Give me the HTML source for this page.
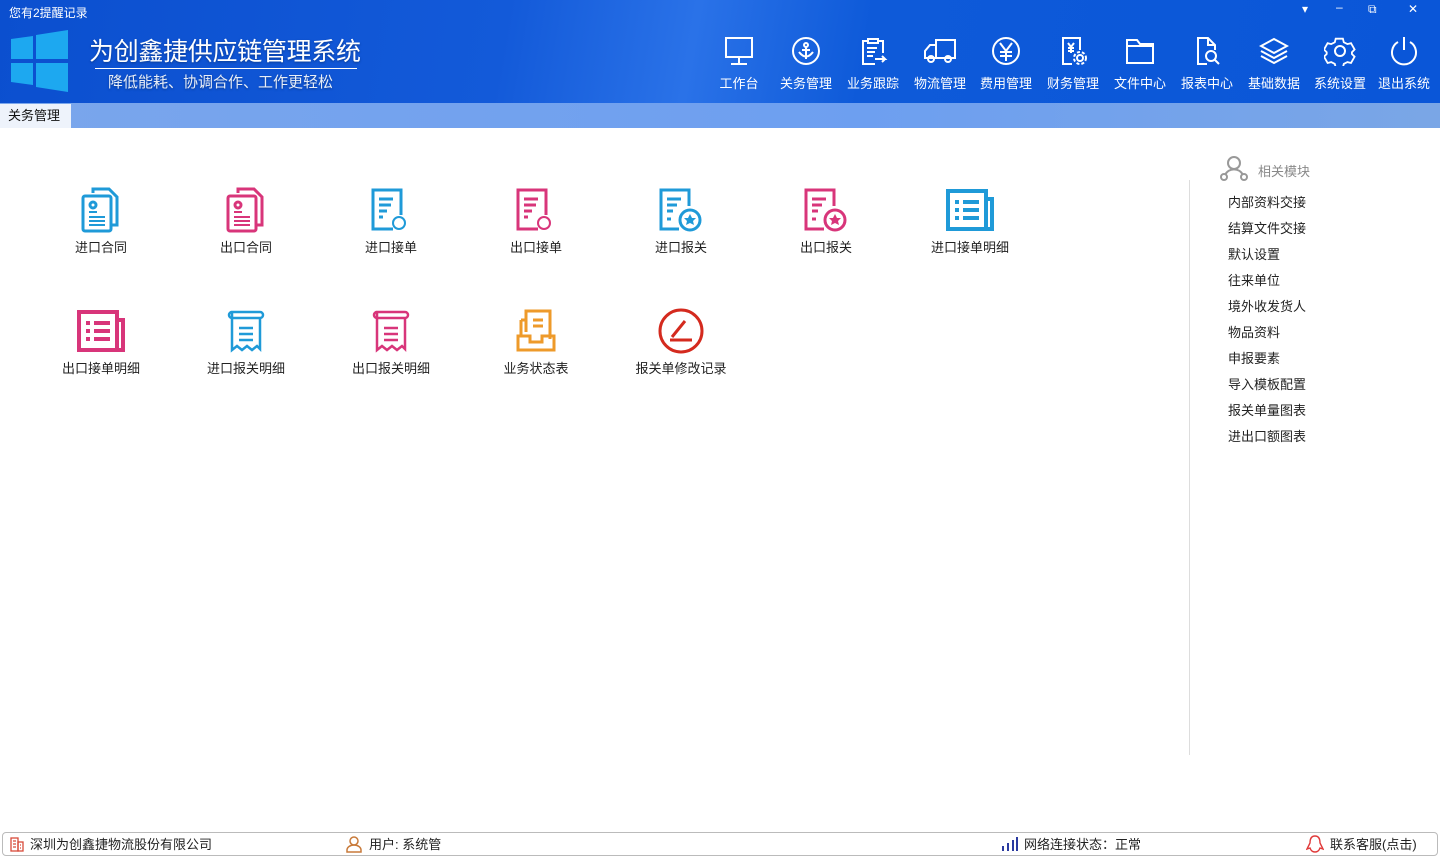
<!DOCTYPE html>
<html><head><meta charset="utf-8"><style>
*{margin:0;padding:0;box-sizing:border-box}
body{width:1440px;height:856px;position:relative;background:#fff;font-family:"Liberation Sans","Noto Sans CJK SC",sans-serif;font-size:13px;color:#222;overflow:hidden}
.hdr{position:absolute;left:0;top:0;width:1440px;height:103px;background:linear-gradient(100deg,#0b4fcf 0%,#135ad9 35%,#2a72e8 48%,#0e5ad9 60%,#0a56d8 100%)}
.tabbar{position:absolute;left:0;top:103px;width:1440px;height:25px;background:linear-gradient(90deg,#7aa6ec,#6d9ff0 60%,#7aa6e6)}
.tab{position:absolute;left:0;top:104px;width:71px;height:24px;background:#eef3fb;font-size:13px;line-height:24px;padding-left:8px;color:#111}
.abs{position:absolute}
.nav{position:absolute;top:36px;width:66px;text-align:center;color:#fff;font-size:13px}
.nav svg{display:block;margin:0 auto 7px}
.it{position:absolute;width:140px;text-align:center;font-size:13px;color:#222}
.it svg{display:block;margin:0 auto 4px}
.rl{position:absolute;left:1228px;font-size:13px;color:#222}
.sb{position:absolute;left:2px;top:832px;width:1436px;height:24px;border:1px solid #bbb;border-radius:4px;background:#fff}
.sb span{position:absolute;top:1px;font-size:13px;color:#222}
</style></head><body>
<div class="hdr"></div>
<div class="abs" style="left:9px;top:4px;color:#fff;font-size:12px">您有2提醒记录</div>
<svg class="abs" style="left:11px;top:30px" width="58" height="62"><polygon points="0,9 22,6 22,29 0,29" fill="#1da8f0"/><polygon points="25,5 57,0 57,29 25,29" fill="#1da8f0"/><polygon points="0,33 22,33 22,55 0,52" fill="#1da8f0"/><polygon points="25,33 57,33 57,62 25,57" fill="#1da8f0"/></svg>
<div class="abs" style="left:89px;top:32px;color:#fff;font-size:25px;letter-spacing:-0.3px;text-shadow:0 1px 2px #0a3a90">为创鑫捷供应链管理系统</div>
<div class="abs" style="left:95px;top:68px;width:262px;height:1px;background:#fff"></div>
<div class="abs" style="left:108px;top:71px;color:#e8eef8;font-size:15px;text-shadow:0 1px 2px #0a3a90">降低能耗、协调合作、工作更轻松</div>
<div class="abs" style="left:1300px;top:2px;color:#fff;font-size:12px;width:130px">
<span class="abs" style="left:2px">▾</span><span class="abs" style="left:36px;top:-2px">–</span><span class="abs" style="left:68px">⧉</span><span class="abs" style="left:108px">✕</span></div>
<div class="nav" style="left:706px"><svg width="30" height="30" fill="none" stroke="#fff" stroke-width="2"><rect x="2" y="2" width="26" height="19"/><path d="M15 21v6M7 28h16"/></svg>工作台</div>
<div class="nav" style="left:773px"><svg width="30" height="30" fill="none" stroke="#fff" stroke-width="2"><circle cx="15" cy="15" r="13"/><circle cx="15" cy="9" r="2"/><path d="M15 11v12M8 16q7 9 14 0M11 14h8"/></svg>关务管理</div>
<div class="nav" style="left:840px"><svg width="30" height="30" fill="none" stroke="#fff" stroke-width="2"><path d="M10 3h10v4H10zM10 5H5v23h12M20 5h5v12M9 12h10M9 16h8M9 20h6M17 23h10l-3-3m3 3-3 3"/></svg>业务跟踪</div>
<div class="nav" style="left:907px"><svg width="34" height="30" fill="none" stroke="#fff" stroke-width="2"><rect x="13" y="4" width="19" height="18"/><path d="M13 9H7l-5 6v7h11"/><circle cx="8" cy="23" r="3"/><circle cx="25" cy="23" r="3"/></svg>物流管理</div>
<div class="nav" style="left:973px"><svg width="30" height="30" fill="none" stroke="#fff" stroke-width="2"><circle cx="15" cy="15" r="13"/><path d="M9 7l6 8 6-8M15 15v10M9 16h12M9 20h12"/></svg>费用管理</div>
<div class="nav" style="left:1040px"><svg width="30" height="30" fill="none" stroke="#fff" stroke-width="2"><path d="M14 28H5V2h17v12"/><path d="M10 7l3 4 3-4M13 11v6M10 12h6M10 15h6"/><circle cx="22" cy="22" r="3"/><circle cx="22" cy="22" r="6" stroke-dasharray="3 2"/></svg>财务管理</div>
<div class="nav" style="left:1107px"><svg width="30" height="30" fill="none" stroke="#fff" stroke-width="2"><path d="M2 4h10l3 4h13v19H2zM2 10h26"/></svg>文件中心</div>
<div class="nav" style="left:1174px"><svg width="30" height="30" fill="none" stroke="#fff" stroke-width="2"><path d="M15 28H6V2h10l7 7v5M16 2v7h7"/><circle cx="19" cy="20" r="5"/><path d="M23 24l4 4"/></svg>报表中心</div>
<div class="nav" style="left:1241px"><svg width="30" height="30" fill="none" stroke="#fff" stroke-width="2"><path d="M15 3l13 7-13 7-13-7zM2 15l13 7 13-7M2 20l13 7 13-7"/></svg>基础数据</div>
<div class="nav" style="left:1307px"><svg width="32" height="30" fill="none" stroke="#fff" stroke-width="2"><path d="M12 2h8l1 4 4 2 4-1 4 7-3 3v2l3 3-4 7-4-1-4 2-1 4h-8l-1-4-4-2-4 1-4-7 3-3v-2l-3-3 4-7 4 1 4-2z" transform="scale(.9) translate(1,1)"/><circle cx="16" cy="15" r="5"/></svg>系统设置</div>
<div class="nav" style="left:1371px"><svg width="30" height="30" fill="none" stroke="#fff" stroke-width="2"><path d="M9 6a12 12 0 1 0 12 0M15 1v13"/></svg>退出系统</div>
<div class="tabbar"></div>
<div class="tab">关务管理</div>

<!-- row 1 -->
<div class="it" style="left:31px;top:187px"><svg width="44" height="46" fill="none" stroke="#1f9ad8" stroke-width="3"><path d="M14 6V2h16l8 8v28h-6"/><rect x="4" y="9" width="28" height="35" rx="2"/><circle cx="14" cy="18" r="3"/><path d="M10 25h8M10 30h16M10 34h16M10 38h16" stroke-width="2"/></svg>进口合同</div>
<div class="it" style="left:176px;top:187px"><svg width="44" height="46" fill="none" stroke="#d8357a" stroke-width="3"><path d="M14 6V2h16l8 8v28h-6"/><rect x="4" y="9" width="28" height="35" rx="2"/><circle cx="14" cy="18" r="3"/><path d="M10 25h8M10 30h16M10 34h16M10 38h16" stroke-width="2"/></svg>出口合同</div>
<div class="it" style="left:321px;top:187px"><svg width="44" height="46" fill="none" stroke="#1f9ad8" stroke-width="3"><path d="M24 42H4V3h28v25"/><path d="M10 12h14M10 18h12M10 24h8M10 30h4"/><circle cx="30" cy="36" r="6" stroke-width="2"/></svg>进口接单</div>
<div class="it" style="left:466px;top:187px"><svg width="44" height="46" fill="none" stroke="#d8357a" stroke-width="3"><path d="M24 42H4V3h28v25"/><path d="M10 12h14M10 18h12M10 24h8M10 30h4"/><circle cx="30" cy="36" r="6" stroke-width="2"/></svg>出口接单</div>
<div class="it" style="left:611px;top:187px"><svg width="48" height="46" fill="none" stroke="#1f9ad8" stroke-width="3"><path d="M22 42H4V3h28v16"/><path d="M10 12h14M10 18h10M10 24h6M10 32h4"/><circle cx="33" cy="33" r="10"/><path d="M33 27l2 4h4l-3 3 1 4-4-2-4 2 1-4-3-3h4z" fill="#1f9ad8" stroke="none"/></svg>进口报关</div>
<div class="it" style="left:756px;top:187px"><svg width="48" height="46" fill="none" stroke="#d8357a" stroke-width="3"><path d="M22 42H4V3h28v16"/><path d="M10 12h14M10 18h10M10 24h6M10 32h4"/><circle cx="33" cy="33" r="10"/><path d="M33 27l2 4h4l-3 3 1 4-4-2-4 2 1-4-3-3h4z" fill="#d8357a" stroke="none"/></svg>出口报关</div>
<div class="it" style="left:900px;top:187px"><svg width="50" height="46" fill="none" stroke="#1f9ad8" stroke-width="4"><rect x="3" y="4" width="38" height="38"/><path d="M41 12h6v30h-6M10 15h4M18 15h16M10 23h4M18 23h16M10 31h4M18 31h16"/></svg>进口接单明细</div>
<!-- row 2 -->
<div class="it" style="left:31px;top:308px"><svg width="50" height="46" fill="none" stroke="#d8357a" stroke-width="4"><rect x="3" y="4" width="38" height="38"/><path d="M41 12h6v30h-6M10 15h4M18 15h16M10 23h4M18 23h16M10 31h4M18 31h16"/></svg>出口接单明细</div>
<div class="it" style="left:176px;top:308px"><svg width="40" height="46" fill="none" stroke="#1f9ad8" stroke-width="2.5"><path d="M6 4h28a3 3 0 0 1 0 6H6zM6 4a3 3 0 0 0 0 6M6 10v32l5-4 5 4 5-4 5 4 5-4 3 3V10M13 20h14M13 26h14M13 32h14"/></svg>进口报关明细</div>
<div class="it" style="left:321px;top:308px"><svg width="40" height="46" fill="none" stroke="#d8357a" stroke-width="2.5"><path d="M6 4h28a3 3 0 0 1 0 6H6zM6 4a3 3 0 0 0 0 6M6 10v32l5-4 5 4 5-4 5 4 5-4 3 3V10M13 20h14M13 26h14M13 32h14"/></svg>出口报关明细</div>
<div class="it" style="left:466px;top:308px"><svg width="42" height="46" fill="none" stroke="#ee9a2a" stroke-width="3"><path d="M11 24V3h24v28M6 12h5M6 12v16M18 12h10M18 18h10M3 28h12v6h12v-6h12v14H3z"/></svg>业务状态表</div>
<div class="it" style="left:611px;top:308px"><svg width="50" height="46" fill="none" stroke="#d42a1e" stroke-width="3"><circle cx="25" cy="23" r="21"/><path d="M14 32h22M16 29l13-16"/></svg>报关单修改记录</div>

<!-- right panel -->
<div class="abs" style="left:1189px;top:180px;width:1px;height:575px;background:#ddd"></div>
<svg class="abs" style="left:1220px;top:155px" width="28" height="26" fill="none" stroke="#999" stroke-width="2"><circle cx="14" cy="8" r="6"/><path d="M5 20a10 10 0 0 1 18 0"/><circle cx="4" cy="22" r="3"/><circle cx="24" cy="22" r="3"/></svg>
<div class="abs" style="left:1258px;top:161px;color:#888;font-size:13px">相关模块</div>
<div class="rl" style="top:192px">内部资料交接</div>
<div class="rl" style="top:218px">结算文件交接</div>
<div class="rl" style="top:244px">默认设置</div>
<div class="rl" style="top:270px">往来单位</div>
<div class="rl" style="top:296px">境外收发货人</div>
<div class="rl" style="top:322px">物品资料</div>
<div class="rl" style="top:348px">申报要素</div>
<div class="rl" style="top:374px">导入模板配置</div>
<div class="rl" style="top:400px">报关单量图表</div>
<div class="rl" style="top:426px">进出口额图表</div>

<div class="sb">
<svg class="abs" style="left:6px;top:3px" width="16" height="16" fill="none" stroke="#d84a3a" stroke-width="1.3"><rect x="2" y="2" width="7" height="13"/><rect x="9" y="6" width="5" height="9"/><path d="M4 5h3M4 8h3M4 11h3M11 9h1M11 12h1"/></svg>
<span style="left:27px">深圳为创鑫捷物流股份有限公司</span>
<svg class="abs" style="left:343px;top:3px" width="16" height="17" fill="none" stroke="#c87a3a" stroke-width="1.5"><circle cx="8" cy="5" r="4"/><path d="M1 16v-2a7 5 0 0 1 14 0v2z"/></svg>
<span style="left:366px">用户: 系统管</span>
<svg class="abs" style="left:998px;top:4px" width="18" height="14" fill="#2a3aa0"><rect x="1" y="9" width="2" height="5"/><rect x="6" y="6" width="2" height="8"/><rect x="11" y="3" width="2" height="11"/><rect x="15" y="0" width="2" height="14"/></svg>
<span style="left:1021px">网络连接状态：正常</span>
<svg class="abs" style="left:1303px;top:2px" width="18" height="19" fill="none" stroke="#e03a3a" stroke-width="1.4"><path d="M9 1c-4 0-5 3-5 7l-3 6 3-1c1 3 3 4 5 4s4-1 5-4l3 1-3-6c0-4-1-7-5-7z"/></svg>
<span style="left:1327px">联系客服(点击)</span>
</div>
</body></html>
